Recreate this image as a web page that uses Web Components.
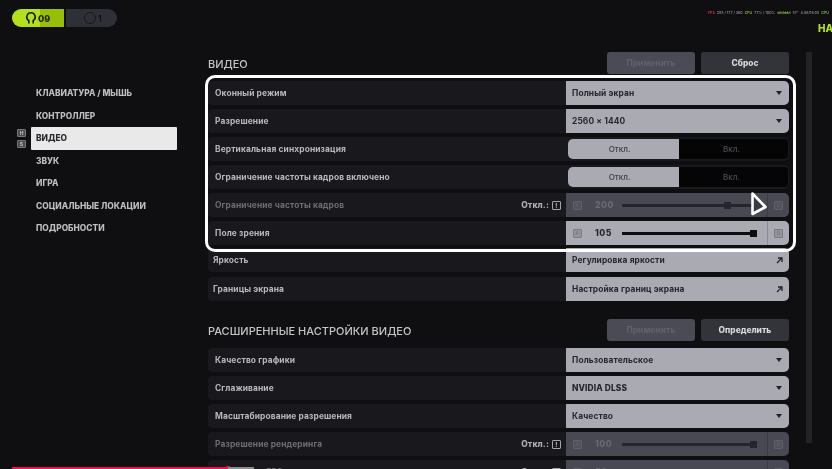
<!DOCTYPE html>
<html lang="ru">
<head>
<meta charset="utf-8">
<title>Настройки видео</title>
<style>
  html, body { margin: 0; width: 832px; height: 469px; overflow: hidden; background: #0f0f12; }
  body { font-family: Inter, "Liberation Sans", sans-serif; }
</style>
</head>
<body>
<settings-screen>
  <top-bar slot="top"></top-bar>
  <side-nav slot="nav">
    <nav-item>Клавиатура / мышь</nav-item>
    <nav-item>Контроллер</nav-item>
    <nav-item active>Видео</nav-item>
    <nav-item>Звук</nav-item>
    <nav-item>Игра</nav-item>
    <nav-item>Социальные локации</nav-item>
    <nav-item>Подробности</nav-item>
  </side-nav>

  <section-head title="Видео" action="Сброс"></section-head>
  <setting-row>Оконный режим<select-box slot="control">Полный экран</select-box></setting-row>
  <setting-row>Разрешение<select-box slot="control">2560 × 1440</select-box></setting-row>
  <setting-row>Вертикальная синхронизация<toggle-box slot="control"></toggle-box></setting-row>
  <setting-row>Ограничение частоты кадров включено<toggle-box slot="control"></toggle-box></setting-row>
  <setting-row dim aside="Откл.:">Ограничение частоты кадров<slider-box slot="control" dim value="200" pos="78.5"></slider-box></setting-row>
  <setting-row>Поле зрения<slider-box slot="control" value="105" pos="100"></slider-box></setting-row>
  <setting-row class="link first-link" tight>Яркость<link-box slot="control">Регулировка яркости</link-box></setting-row>
  <setting-row class="link" tight>Границы экрана<link-box slot="control">Настройка границ экрана</link-box></setting-row>

  <section-head class="second" title="Расширенные настройки видео" action="Определить"></section-head>
  <setting-row>Качество графики<select-box slot="control">Пользовательское</select-box></setting-row>
  <setting-row>Сглаживание<select-box slot="control"><b>NVIDIA DLSS</b></select-box></setting-row>
  <setting-row>Масштабирование разрешения<select-box slot="control">Качество</select-box></setting-row>
  <setting-row dim aside="Откл.:">Разрешение рендеринга<slider-box slot="control" dim value="100" pos="100"></slider-box></setting-row>
  <setting-row dim aside="Откл.:">Макс. част. FPS<slider-box slot="control" dim value="50" pos="7"></slider-box></setting-row>
</settings-screen>

<script>
class SettingsScreen extends HTMLElement {
  constructor() {
    super();
    this.attachShadow({ mode: "open" });
    this.shadowRoot.innerHTML = `
      <style>
        :host { display: block; position: relative; width: 832px; height: 469px; overflow: hidden; background: #0f0f12; color: #b8b8bc; filter: blur(.35px); }
        .body { display: flex; }
        .nav { width: 208px; flex: none; }
        .panel { width: 581px; flex: none; display: flex; flex-direction: column; gap: 4px; }
        .track { width: 6px; height: 391px; margin-left: 17px; background: #232327; flex: none; }
        .highlight { position: absolute; left: 204.5px; top: 74.5px; width: 585.5px; height: 171px; border: 3px solid #fff; border-radius: 10px; pointer-events: none; }
        .cursor { position: absolute; left: 749px; top: 190px; }
        .progress { position: absolute; left: 12px; bottom: 0; width: 216px; height: 2px; background: #f0104f; }
        .progress::after { content: ""; position: absolute; right: -3px; top: -1px; width: 6px; height: 6px; border-radius: 50%; background: #f0104f; }
        .buffer { position: absolute; left: 228px; bottom: 0; width: 26px; height: 2px; background: #8d8d90; }
      </style>
      <slot name="top"></slot>
      <div class="body">
        <div class="nav"><slot name="nav"></slot></div>
        <div class="panel"><slot></slot></div>
        <div class="track"></div>
      </div>
      <div class="highlight"></div>
      <svg class="cursor" width="20" height="27" viewBox="0 0 20 27">
        <path d="M3.5 3.5 L16.5 17 L3.5 24 Z" fill="#3a3b42" stroke="#fff" stroke-width="2.6" stroke-linejoin="round"/>
      </svg>
      <div class="progress"></div>
      <div class="buffer"></div>
    `;
  }
}

class TopBar extends HTMLElement {
  constructor() {
    super();
    this.attachShadow({ mode: "open" });
    this.shadowRoot.innerHTML = `
      <style>
        :host { display: flex; height: 52px; box-sizing: border-box; padding: 9px 0 0 12px; font-family: Inter, sans-serif; }
        .pill { display: flex; height: 18px; font-size: 9px; font-weight: 800; color: #20240c; }
        .lime { width: 52px; display: flex; align-items: center; border-radius: 9px 0 0 9px; background: linear-gradient(90deg, #b5e01c 0 54%, #98bf07 54%); padding-left: 13px; box-sizing: border-box; gap: 1px; }
        .grey { width: 51px; margin-left: 2px; display: flex; align-items: center; padding-left: 18px; box-sizing: border-box; gap: 2px; border-radius: 0 9px 9px 0; background: #2e2f37; color: #101014; font-weight: 500; }
        .ring { width: 10px; height: 10px; border: 1px solid #17181c; border-radius: 50%; }
        .right { margin-left: auto; width: 124px; overflow: hidden; }
        .stats { display: flex; gap: 2px; height: 8px; padding-top: 1px; font-size: 3.6px; line-height: 6px; font-weight: 600; white-space: nowrap; color: #85858a; }
        .red { color: #d9374b; } .grn { color: #7fbf2b; }
        .back { margin: 3px 0 0 110px; font-size: 10px; line-height: 14px; font-weight: 800; color: #b5e01c; }
      </style>
      <div class="pill">
        <div class="lime">
          <svg width="12" height="14" viewBox="0 0 12 14"><path d="M6 1 A5 5 0 0 0 3 10 L3 12.5 L4.6 12.5 L4.6 9 A3.4 3.4 0 1 1 7.4 9 L7.4 12.5 L9 12.5 L9 10 A5 5 0 0 0 6 1 Z" fill="#17190c"/></svg>
          <span>09</span>
        </div>
        <div class="grey"><span class="ring"></span><span>1</span></div>
      </div>
      <div class="right">
        <div class="stats"><span class="red">FPS</span><span>285 / 177 / 360</span><span class="grn">CPU</span><span>77% / 100%</span><span class="grn">dddddd</span><span>57°</span><span>4.86/16.08</span><span class="grn">GPU</span></div>
        <div class="back">НА</div>
      </div>
    `;
  }
}

class SideNav extends HTMLElement {
  constructor() {
    super();
    this.attachShadow({ mode: "open" });
    this.shadowRoot.innerHTML = `
      <style>
        :host { display: block; position: relative; padding: 30px 0 0 31px; }
        .keys { position: absolute; left: 17px; top: 77px; display: flex; flex-direction: column; gap: 3px; }
        .keys span { width: 9px; height: 8px; box-sizing: border-box; border-radius: 1px; background: #4a4a4f; border: 1px solid #77777b; color: #c5c5c9; font: 700 5px/6px Inter, sans-serif; text-align: center; }
      </style>
      <div class="keys"><span>H</span><span>S</span></div>
      <slot></slot>
    `;
  }
}

class NavItem extends HTMLElement {
  constructor() {
    super();
    this.attachShadow({ mode: "open" });
    this.shadowRoot.innerHTML = `
      <style>
        :host { display: flex; align-items: center; width: 146px; height: 22.5px; box-sizing: border-box; padding-left: 5px; font: 800 8.4px Inter, sans-serif; text-transform: uppercase; color: #bdbdc0; white-space: nowrap; }
        :host([active]) { background: #e9e9ea; color: #2a2a2e; border-radius: 1px; }
      </style>
      <slot></slot>
    `;
  }
}

class SectionHead extends HTMLElement {
  constructor() {
    super();
    this.attachShadow({ mode: "open" });
  }

  connectedCallback() {
    this.shadowRoot.innerHTML = `
      <style>
        :host { display: flex; align-items: center; gap: 6px; height: 22px; margin: 0 0 3px; }
        :host(.second) { margin-top: 13px; }
        h2 { margin: 1px auto 0 0; font: 500 11px Inter, sans-serif; text-transform: uppercase; color: #c4c4c8; }
        button { width: 88px; height: 22px; border: 0; border-radius: 3px; font: 800 8.4px Inter, sans-serif; padding: 0; }
        .off { background: #4a4b55; color: #5f606a; }
        .on { background: #333439; color: #d9d9dc; }
      </style>
      <h2>${this.getAttribute("title")}</h2>
      <button class="off">Применить</button>
      <button class="on">${this.getAttribute("action")}</button>
    `;
  }
}

class SettingRow extends HTMLElement {
  constructor() {
    super();
    this.attachShadow({ mode: "open" });
  }

  connectedCallback() {
    const aside = this.getAttribute("aside");
    this.shadowRoot.innerHTML = `
      <style>
        :host { display: flex; height: 24px; flex: none; font-family: Inter, sans-serif; }
        :host(.link) { margin-bottom: 1px; }
        :host(.first-link) { margin-top: -1px; }
        .label { flex: 1; display: flex; align-items: center; box-sizing: border-box; padding: 0 5px 0 7px; background: #19191d; border-radius: 4px 0 0 4px; font-size: 8.4px; font-weight: 700; letter-spacing: .12px; color: #b9b9bd; white-space: nowrap; }
        :host([tight]) .label { padding-left: 5px; }
        :host([dim]) .label { color: #6d6d73; }
        .aside { margin-left: auto; display: flex; align-items: center; gap: 3px; color: #b0b0b4; font-weight: 800; }
        .info { width: 9px; height: 9px; box-sizing: border-box; border: 1px solid #a5a5a9; border-radius: 1px; font-size: 6px; line-height: 7px; text-align: center; }
        .control { width: 223px; flex: none; }
      </style>
      <div class="label"><slot></slot>${aside ? `<span class="aside">${aside}<span class="info">!</span></span>` : ""}</div>
      <div class="control"><slot name="control"></slot></div>
    `;
  }
}

class SelectBox extends HTMLElement {
  constructor() {
    super();
    this.attachShadow({ mode: "open" });
    this.shadowRoot.innerHTML = `
      <style>
        :host { display: flex; align-items: center; justify-content: space-between; height: 24px; box-sizing: border-box; padding: 0 7px 0 6px; background: #a9aab2; border-radius: 0 5px 5px 0; color: #26272c; font: 700 8.4px Inter, sans-serif; letter-spacing: .12px; }
        ::slotted(b) { font-weight: 800; }
        i { width: 0; height: 0; border: 3.5px solid transparent; border-top: 4px solid #1f2024; border-bottom: 0; }
      </style>
      <span><slot></slot></span><i></i>
    `;
  }
}

class LinkBox extends HTMLElement {
  constructor() {
    super();
    this.attachShadow({ mode: "open" });
    this.shadowRoot.innerHTML = `
      <style>
        :host { display: flex; align-items: center; justify-content: space-between; height: 24px; box-sizing: border-box; padding: 0 6px; background: #a9aab2; border-radius: 0 5px 5px 0; color: #26272c; font: 700 8.4px Inter, sans-serif; letter-spacing: .12px; }
      </style>
      <span><slot></slot></span>
      <svg width="7" height="7" viewBox="0 0 7 7"><path d="M1 6 L5.6 1.4 M2 1 H6 V5" fill="none" stroke="#222328" stroke-width="1.3"/></svg>
    `;
  }
}

class ToggleBox extends HTMLElement {
  constructor() {
    super();
    this.attachShadow({ mode: "open" });
    this.shadowRoot.innerHTML = `
      <style>
        :host { display: flex; height: 24px; box-sizing: border-box; padding: 2px 1.5px; background: #19191d; border-radius: 0 5px 5px 0; font: 500 8px Inter, sans-serif; }
        div { display: flex; align-items: center; justify-content: center; box-sizing: border-box; }
        .off { width: 111px; padding-right: 7px; background: #a9aab2; color: #3d3e45; border-radius: 5px 0 0 5px; }
        .on { flex: 1; padding-right: 3px; background: #050506; color: #4b4b52; border-radius: 0 4px 4px 0; }
      </style>
      <div class="off">Откл.</div><div class="on">Вкл.</div>
    `;
  }
}

class SliderBox extends HTMLElement {
  constructor() {
    super();
    this.attachShadow({ mode: "open" });
  }

  connectedCallback() {
    const pos = this.getAttribute("pos");
    this.shadowRoot.innerHTML = `
      <style>
        :host { display: flex; align-items: center; height: 24px; background: #a9aab2; border-radius: 0 5px 5px 0; color: #25262b; font: 800 8.6px Inter, sans-serif; letter-spacing: .5px; --line: #8a8b93; --key: #93949c; --edge: #7a7b83; --bar: #0e0e11; }
        :host([dim]) { background: #484953; color: #6a6b75; --line: #3b3c45; --key: #50515b; --edge: #5f606a; --bar: #25262d; }
        .key { width: 22px; height: 100%; flex: none; display: flex; align-items: center; justify-content: center; box-sizing: border-box; }
        .key:first-child { border-right: 1px solid var(--line); }
        .key:last-child { border-left: 1px solid var(--line); }
        .key span { width: 9px; height: 9px; box-sizing: border-box; background: var(--key); border: 1px solid var(--edge); border-radius: 1px; font: 700 5px/7px Inter, sans-serif; text-align: center; color: var(--edge); letter-spacing: 0; }
        .val { width: 33px; padding-left: 7px; box-sizing: border-box; flex: none; }
        .bar { position: relative; width: 135px; height: 3px; margin-left: 1px; background: var(--bar); }
        .thumb { position: absolute; top: -2px; left: calc(${pos}% - ${pos === "100" ? 7 : 3.5}px); width: 7px; height: 7px; background: var(--bar); }
        .gap { flex: 1; }
      </style>
      <div class="key"><span>A</span></div>
      <div class="val">${this.getAttribute("value")}</div>
      <div class="bar"><div class="thumb"></div></div>
      <div class="gap"></div>
      <div class="key"><span>D</span></div>
    `;
  }
}

customElements.define("settings-screen", SettingsScreen);
customElements.define("top-bar", TopBar);
customElements.define("side-nav", SideNav);
customElements.define("nav-item", NavItem);
customElements.define("section-head", SectionHead);
customElements.define("setting-row", SettingRow);
customElements.define("select-box", SelectBox);
customElements.define("link-box", LinkBox);
customElements.define("toggle-box", ToggleBox);
customElements.define("slider-box", SliderBox);
</script>
</body>
</html>
